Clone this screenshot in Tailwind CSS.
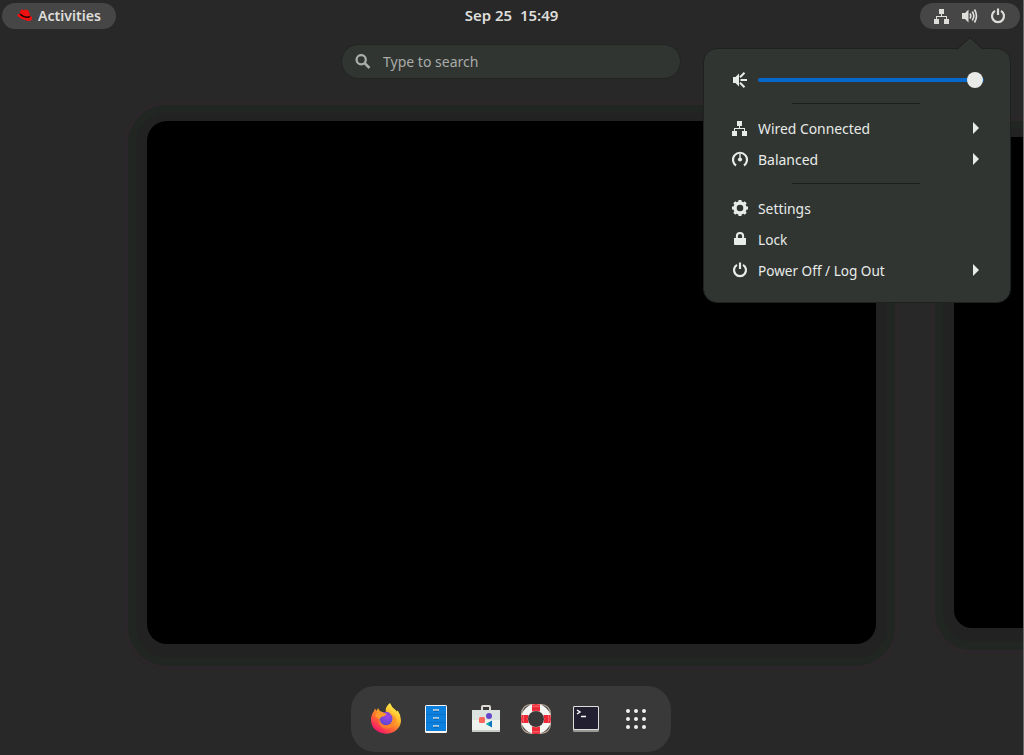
<!DOCTYPE html>
<html lang="en">
<head>
<meta charset="utf-8">
<title>Activities</title>
<script src="https://cdn.jsdelivr.net/npm/@tailwindcss/browser@4"></script>
</head>
<body class="bg-[#282828]">
<svg class="hidden">
  <symbol id="net" viewBox="0 0 16 16"><path fill="currentColor" d="M5 0h5v5H8v2h5v3h2v5h-5v-5h2V8H3v2h2v5H0v-5h2V7h5V5H5z"/></symbol>
  <symbol id="power" viewBox="0 0 16 16"><path d="M5 2.9a6 6 0 1 0 6 0M8 .5v6.5" fill="none" stroke="currentColor" stroke-width="2.2"/></symbol>
  <symbol id="arrow" viewBox="0 0 8 12"><path d="M1 0l6 6-6 6z" fill="currentColor"/></symbol>
</svg>
<div class="relative flex h-[755px] w-[1024px] flex-col overflow-hidden border-r border-[#6b6b6b] font-['Noto_Sans','Open_Sans',sans-serif] text-[15px] text-[#e8ebe8]">
  <header class="grid h-8 shrink-0 grid-cols-[1fr_auto_1fr] items-center text-[15px] font-semibold text-[#deddda]">
    <div class="ml-0.5 flex h-[26px] w-[114px] items-center rounded-full bg-[#464646] pl-[15px]">
      <svg class="mr-[5px] h-4 w-4" viewBox="0 0 16 16"><path fill="#f01010" d="M3.6 2.5Q4 1.1 5.5 1.7q1 .4 2 0 1.5-.6 3 .4 1.6.9 1.900 3l.5 2.500q2.400 1.200 2.300 3-.4 2.600-4.200 2.300Q5 12 1.600 9 0 7.400.7 6.200q.8-.7 2.100-.5z"/><path d="M3 6q3.500 3.600 8.600 3.200.9-.2 1.200-1.200" fill="none" stroke="#200" stroke-width="1.400"/></svg>
      <span class="mb-0.5 inline-block h-5 w-16 origin-left scale-x-[0.94] whitespace-nowrap leading-5">Activities</span>
    </div>
    <div class="mb-0.5 scale-x-[1] whitespace-pre text-center leading-5">Sep 25  15:49</div>
    <div class="mr-[3px] flex h-[26px] w-[100px] items-center gap-3 justify-self-end rounded-full bg-[#464646] pl-[14px]">
      <svg class="mt-px h-4 w-4"><use href="#net"/></svg>
      <svg class="h-4 w-4" viewBox="0 0 16 16"><path fill="currentColor" d="M0 5h3l3.500-3.500v13L3 11H0z"/><path d="M8 5.500q1.500 2.500 0 5M10.300 3.500q3 4.500 0 9M12.500 1.500q4 6.500 0 13" fill="none" stroke="currentColor" stroke-width="1.700"/></svg>
      <svg class="h-4 w-4"><use href="#power"/></svg>
    </div>
  </header>

  <div class="mt-[12px] ml-[341px] flex h-[35px] w-[340px] shrink-0 items-center rounded-full border border-[#212421] bg-[#303532] pl-[13px] text-[#a9aca9]">
    <svg class="mr-[12px] h-4 w-4" viewBox="0 0 16 16"><circle cx="6.200" cy="5.700" r="4.600" fill="none" stroke="currentColor" stroke-width="2.300"/><path d="M9.500 9l5 5" stroke="currentColor" stroke-width="2.500"/></svg>
    <span class="origin-left scale-x-[0.935]">Type to search</span>
  </div>

  <main class="mt-[42px] ml-[147px] flex h-[523px] shrink-0 items-center gap-[78px]">
    <div class="h-[523px] w-[729px] shrink-0 rounded-[20px] bg-black shadow-[0_3px_0_11px_#222222,0_3px_0_19px_#222622,0_3px_0_23px_#2a2629]"></div>
    <div class="h-[491px] w-[729px] shrink-0 rounded-[18px] bg-black shadow-[0_3px_0_11px_#222222,0_3px_0_19px_#222622,0_3px_0_23px_#2a2629]"></div>
  </main>

  <footer class="mt-[42px] ml-[351px] flex h-[66px] w-[320px] shrink-0 items-center gap-[18px] rounded-[24px] bg-[#393939] pl-[19px]">
    <svg class="h-8 w-8" viewBox="0 0 32 32">
      <defs>
        <linearGradient id="fx" x1=".85" y1=".1" x2=".25" y2=".95"><stop offset="0" stop-color="#fff44f"/><stop offset=".35" stop-color="#ffb52a"/><stop offset=".65" stop-color="#ff6a30"/><stop offset="1" stop-color="#f5156c"/></linearGradient>
        <radialGradient id="fp" cx=".6" cy=".35" r=".7"><stop offset="0" stop-color="#a347e8"/><stop offset="1" stop-color="#5546d0"/></radialGradient>
      </defs>
      <path fill="url(#fx)" d="M20 0q1.500 4 5 6.500 1 .5 1.600 2l1.200-1q3.200 4.500 3.200 10A15 13.500 0 0 1 1 17Q.8 12 4 8l1-2.600 1.500 2.600L8 5q1 2 2.500 3.500L16 10Q14.500 4 20 0z"/>
      <circle cx="15.800" cy="15.500" r="6.800" fill="url(#fp)"/>
      <path fill="#ff9b2c" d="M5 13q2-4.500 6-4.500 3.500 2 5.300 2-.3 2.500-3.800 3-2.700.8-2.800 3Q7 14 5 13z"/>
      <path d="M10 16q.5 6 6 6.300 6 0 7-5.500.4-4-4-6 8 1 7 8-2 7-10 7-7-1-7.500-8z" fill="#ff8a2a" opacity=".7"/>
    </svg>
    <svg class="h-8 w-8" viewBox="0 0 32 32"><rect x="5" y="2" width="22" height="28" rx="1.500" fill="#f6f5f4"/><path d="M6 3h20v25H6z" fill="#0c80df"/><path d="M6 11.500h20M6 19.500h20" stroke="#0a6fc6"/><path d="M13 7h6M13 15h6M13 23h6" stroke="#d8dfe5" stroke-width="1.600"/><path d="M14 8.300h4M14 16.300h4M14 24.300h4" stroke="#0660ac"/></svg>
    <svg class="h-8 w-8" viewBox="0 0 32 32"><path d="M12 8V4q0-1 1-1h6q1 0 1 1v4" fill="none" stroke="#dedbd7" stroke-width="2"/><rect x="2" y="7" width="28" height="22" rx="1" fill="#eff3ef"/><path d="M2 8q0-1 1-1h26q1 0 1 1v9H2z" fill="#dce2df"/><path d="M2 27h28v1q0 1-1 1H3q-1 0-1-1z" fill="#c7cac5"/><circle cx="19" cy="13" r="3" fill="#6546c8"/><rect x="9" y="14" width="6" height="6" rx="1.500" fill="#ff655b"/><path d="M16 21l6-3.500v7z" fill="#0b78bd"/><path d="M16 21l3-1.700v3.500z" fill="#13bca5"/></svg>
    <svg class="h-8 w-8" viewBox="0 0 32 32"><rect x="1.600" y="1.600" width="28.800" height="28.800" rx="9" fill="none" stroke="#b7a797" stroke-width="1.200"/><circle cx="16" cy="16" r="11.500" fill="none" stroke="#f5f5f3" stroke-width="7"/><path d="M12 1.500q4-1 8 0v7q-4-1.500-8 0zM12 23.500q4 1.500 8 0v7q-4 1-8 0zM1.500 12h7q-1.500 4 0 8h-7q-1-4 0-8zM23.500 12h7q1 4 0 8h-7q1.500-4 0-8z" fill="#ec2935"/><path d="M12.500 3.500q3.500-.8 7 0M12.500 28.500q3.500.8 7 0M3.500 12.500q-.8 3.500 0 7M28.500 12.500q.8 3.500 0 7" fill="none" stroke="#f4707a"/></svg>
    <svg class="h-8 w-8" viewBox="0 0 32 32"><rect x="3" y="3" width="26" height="26" rx="1.500" fill="#9b9995"/><rect x="3" y="3" width="26" height="24" rx="1.500" fill="#deddda"/><rect x="4" y="4" width="24" height="22" rx=".7" fill="#211f30"/><path d="M7 7l3 2-3 2M11 13.500h5" fill="none" stroke="#fff" stroke-width="1.400"/></svg>
    <svg class="h-8 w-8" viewBox="0 0 32 32" fill="#f0f0f0"><circle cx="8" cy="8" r="2"/><circle cx="16" cy="8" r="2"/><circle cx="24" cy="8" r="2"/><circle cx="8" cy="16" r="2"/><circle cx="16" cy="16" r="2"/><circle cx="24" cy="16" r="2"/><circle cx="8" cy="24" r="2"/><circle cx="16" cy="24" r="2"/><circle cx="24" cy="24" r="2"/></svg>
  </footer>

  <div class="absolute top-[48px] left-[703px] flex h-[255px] w-[308px] flex-col rounded-[14px] border border-[#1e211f] bg-[#303532] px-[28px] pt-[15px]">
    <svg class="absolute -top-[12px] left-[253px] h-[13px] w-[26px]" viewBox="0 0 26 13"><path d="M0 13L13 1l13 12z" fill="#303532"/><path d="M0 12.200L13 .600l13 11.600" fill="none" stroke="#1e211f"/></svg>
    <div class="flex h-8 items-center">
      <svg class="mr-[10px] h-4 w-4 shrink-0" viewBox="0 0 16 16"><path d="M1 5h2.500L7 1.500v13L3.500 11H1z" fill="currentColor"/><path d="M8 5.200l4.500-4.500M8.500 8H15M8 10.800l4.500 4.500" stroke="currentColor" stroke-width="2"/></svg>
      <div class="flex h-1 w-[226px] shrink-0 items-center justify-end rounded-full bg-[#0968cc] pr-px"><div class="h-4 w-4 shrink-0 rounded-full bg-[#e8ebe8]"></div></div>
    </div>
    <div class="mt-[7px] ml-[60px] h-px w-[128px] bg-[#1c1f1d]"></div>
    <nav class="mt-[9px]">
      <div class="flex h-[31px] items-center"><svg class="mr-[10px] h-4 w-4"><use href="#net"/></svg><span class="flex-1 origin-left scale-x-[0.925]">Wired Connected</span><svg class="mr-[2px] mb-0.5 h-3 w-2"><use href="#arrow"/></svg></div>
      <div class="flex h-[31px] items-center"><svg class="mr-[10px] mb-0.5 h-4 w-4" viewBox="0 0 16 16"><path d="M4 14.500a7 7 0 1 1 8 0" fill="none" stroke="currentColor" stroke-width="2.200"/><path d="M8 3v5" stroke="currentColor" stroke-width="1.400"/><circle cx="8" cy="8.500" r="2.100" fill="currentColor"/></svg><span class="flex-1 origin-left scale-x-[0.93]">Balanced</span><svg class="mr-[2px] mb-0.5 h-3 w-2"><use href="#arrow"/></svg></div>
    </nav>
    <div class="mt-[8px] ml-[60px] h-px w-[128px] shrink-0 bg-[#1c1f1d]"></div>
    <nav class="mt-[9px]">
      <div class="flex h-[31px] items-center"><svg class="mr-[10px] mb-0.5 h-4 w-4" viewBox="0 0 16 16"><circle cx="8" cy="8" r="5" fill="none" stroke="currentColor" stroke-width="3.400"/><path d="M8 0v3M8 13v3M0 8h3M13 8h3M2.300 2.300l2 2M11.700 11.700l2 2M2.300 13.700l2-2M11.700 4.300l2-2" stroke="currentColor" stroke-width="3"/></svg><span class="origin-left scale-x-[0.925]">Settings</span></div>
      <div class="flex h-[31px] items-center"><svg class="mr-[10px] mb-0.5 h-4 w-4" viewBox="0 0 16 16"><path d="M2 7h12v6q0 1-1 1H3q-1 0-1-1z" fill="currentColor"/><path d="M4.900 8V5q0-3.100 3.100-3.100T11.100 5v3" fill="none" stroke="currentColor" stroke-width="2"/></svg><span class="origin-left scale-x-[0.91]">Lock</span></div>
      <div class="flex h-[31px] items-center"><svg class="mr-[10px] mb-0.5 h-4 w-4"><use href="#power"/></svg><span class="flex-1 origin-left scale-x-[0.905]">Power Off / Log Out</span><svg class="mr-[2px] mb-0.5 h-3 w-2"><use href="#arrow"/></svg></div>
    </nav>
  </div>
</div>
</body>
</html>
